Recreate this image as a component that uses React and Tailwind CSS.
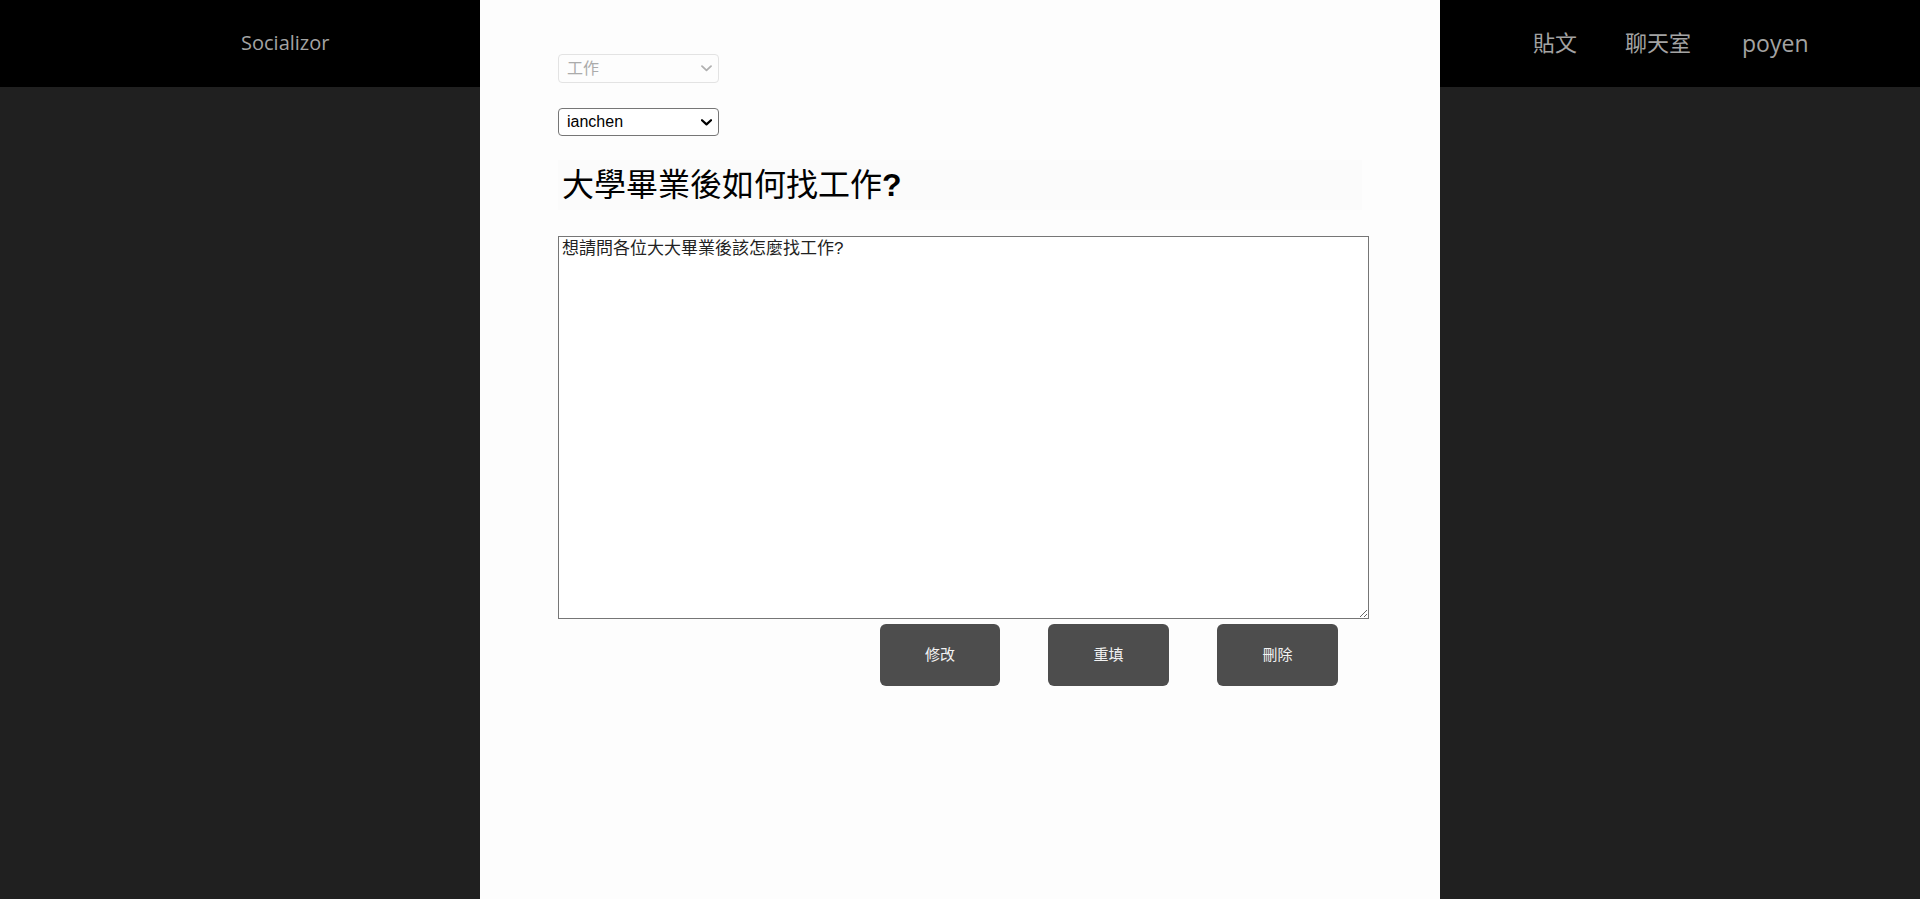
import React from "react";

function Chevron({ color, strokeWidth }) {
  return (
    <svg width="11" height="7" viewBox="0 0 11 7" fill="none">
      <path d="M1 1.2 L5.5 5.4 L10 1.2" stroke={color} strokeWidth={strokeWidth} strokeLinecap="round" strokeLinejoin="round" />
    </svg>
  );
}

export default function App() {
  const cjk = { fontFamily: '"Liberation Sans", "Noto Sans CJK TC", sans-serif' };
  return (
    <div className="grid min-h-[899px] w-full grid-cols-[480px_960px_1fr] bg-[#202020]">
      {/* left column */}
      <div className="flex flex-col">
        <div className="flex h-[87px] items-center bg-black pl-[241px] pb-[1px]">
          <span className="text-[20px] text-[#a3a3a3]" style={{ fontFamily: '"Open Sans", sans-serif' }}>
            Socializor
          </span>
        </div>
      </div>

      {/* center panel */}
      <div className="flex flex-col bg-[#fdfdfd] pl-[78px] pt-[54px]" style={cjk}>
        <div className="flex h-[29px] w-[161px] items-center justify-between rounded-[4px] border border-[#e3e3e3] bg-[#fdfdfd] pl-[8px] pr-[6px]">
          <span className="text-[16px] text-[#ababab]">工作</span>
          <Chevron color="#b0b0b0" strokeWidth="1.8" />
        </div>
        <div className="mt-[25px] flex h-[28px] w-[161px] items-center justify-between rounded-[4px] border border-[#767676] bg-white pl-[8px] pr-[6px]">
          <span className="text-[16px] text-black">ianchen</span>
          <Chevron color="#000" strokeWidth="2.2" />
        </div>
        <div className="mt-[24px] flex h-[50px] w-[804px] items-center bg-[#fbfbfb] pl-[4px]">
          <span className="text-[32px] leading-none text-black">
            大學畢業後如何找工作<span className="font-bold">?</span>
          </span>
        </div>
        <textarea
          className="mt-[26px] h-[383px] w-[811px] border border-[#767676] bg-white px-[3px] py-[2px] text-[17px] leading-[20px] text-[#222] outline-none"
          style={cjk}
          defaultValue="想請問各位大大畢業後該怎麼找工作?"
        />
        <div className="ml-[322px] mt-[5px] flex gap-[48px]">
          <button className="h-[62px] w-[120px] rounded-[6px] bg-[#4d4d4d] text-[15px] text-[#f2f2f2]">修改</button>
          <button className="h-[62px] w-[121px] rounded-[6px] bg-[#4d4d4d] text-[15px] text-[#f2f2f2]">重填</button>
          <button className="h-[62px] w-[121px] rounded-[6px] bg-[#4d4d4d] text-[15px] text-[#f2f2f2]">刪除</button>
        </div>
      </div>

      {/* right column */}
      <div className="flex flex-col">
        <div
          className="flex h-[87px] items-center gap-[48px] bg-black pl-[93px] pb-[3px] text-[22px] leading-none text-[#a3a3a3]"
          style={{ fontFamily: '"Open Sans", "Noto Sans CJK TC", sans-serif' }}
        >
          <span>貼文</span>
          <span>聊天室</span>
          <span className="ml-[3px] pt-[2px] text-[23px]">poyen</span>
        </div>
      </div>
    </div>
  );
}
